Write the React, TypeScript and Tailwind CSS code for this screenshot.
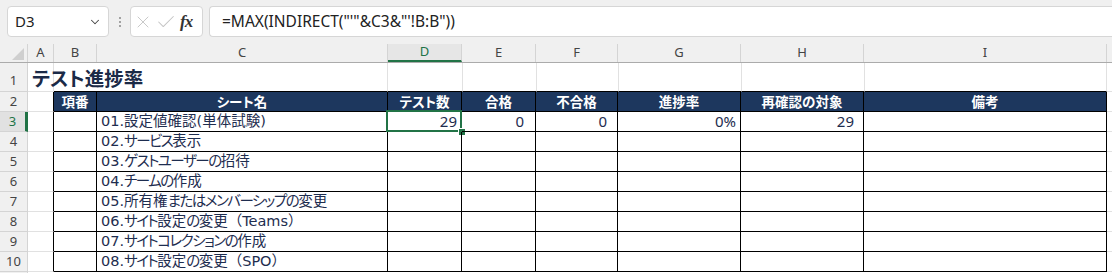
import { ChevronDown, X, Check } from "lucide-react"

const colWidths = ["w-[28px]", "w-[26px]", "w-[43px]", "w-[291px]", "w-[74px]", "w-[74px]", "w-[82px]", "w-[123px]", "w-[123px]", "w-[243px]"]
const letters = ["A", "B", "C", "D", "E", "F", "G", "H", "I"]
const headers = ["項番", "シート名", "テスト数", "合格", "不合格", "進捗率", "再確認の対象", "備考"]
const sheets = [
  "01.設定値確認(単体試験)",
  "02.サービス表示",
  "03.ゲストユーザーの招待",
  "04.チームの作成",
  "05.所有権またはメンバーシップの変更",
  "06.サイト設定の変更（Teams）",
  "07.サイトコレクションの作成",
  "08.サイト設定の変更（SPO）",
]

const cellFont = { fontFamily: '"Noto Sans CJK JP", "Noto Sans", sans-serif' }
const nameFont = { fontFamily: '"DejaVu Sans", "Noto Sans CJK JP", sans-serif' }
const uiFont = { fontFamily: '"Noto Sans", sans-serif' }

// kana in the reference font are narrower than Noto's, tighten them a bit
function SheetName({ text }: { text: string }) {
  const parts = text.split(/([\u3040-\u30ff]+|[（）])/)
  return (
    <>
      {parts.map((p, i) => {
        if (/^[\u3040-\u30ff]+$/.test(p)) return <span key={i} className="tracking-[-1.5px]">{p}</span>
        if (p === "（" || p === "）") return <span key={i} className="[font-feature-settings:normal]">{p}</span>
        return <span key={i}>{p}</span>
      })}
    </>
  )
}

function FormulaBar() {
  return (
    <div className="h-[44px] bg-[#f0f0f0] flex items-start pt-[6px]">
      <div className="ml-[7px] w-[102px] h-[31px] bg-white border border-[#d6d6d6] rounded-[4px] flex items-center justify-between pl-[7px] pr-[6px]">
        <span className="text-[15px] text-[#222]" style={uiFont}>D3</span>
        <ChevronDown size={14} strokeWidth={1.75} className="text-[#444]" />
      </div>
      <div className="w-[21px] h-[31px] flex flex-col items-center justify-center gap-[2px]">
        <span className="w-[2px] h-[2px] bg-[#888] rounded-full" />
        <span className="w-[2px] h-[2px] bg-[#888] rounded-full" />
        <span className="w-[2px] h-[2px] bg-[#888] rounded-full" />
      </div>
      <div className="w-[73px] h-[31px] bg-white border border-[#d6d6d6] rounded-[4px] flex items-center pl-[2px] gap-[2px]">
        <X size={20} strokeWidth={1.1} className="text-[#c4c4c4]" />
        <Check size={22} strokeWidth={1.1} className="text-[#c4c4c4]" />
        <span className="text-[17px] italic font-bold text-[#333] ml-[1px] tracking-[-1px]" style={{ fontFamily: '"Liberation Serif", serif' }}>fx</span>
      </div>
      <div className="ml-[6px] flex-1 h-[31px] bg-white border border-r-0 border-[#d6d6d6] rounded-l-[4px] flex items-center pl-[12px]">
        <span className="text-[15.5px] text-[#222]" style={uiFont}>=MAX(INDIRECT("'"&amp;C3&amp;"'!B:B"))</span>
      </div>
    </div>
  )
}

function ColumnHeader() {
  return (
    <div className="flex h-[19px] bg-[#f0f0f0] border-b border-[#ababab]" style={uiFont}>
      <div className={`${colWidths[0]} shrink-0 border-r border-[#d4d4d4] relative`}>
        <svg width="12" height="12" viewBox="0 0 12 12" className="absolute right-[3px] bottom-[2px]">
          <polygon points="12,0 12,12 0,12" fill="#cfcfcf" />
        </svg>
      </div>
      {letters.map((l, i) =>
        l === "D" ? (
          <div key={l} className={`${colWidths[i + 1]} shrink-0 border-r border-[#d4d4d4] bg-[#e6e6e6] text-[#217346] text-[13px] flex items-center justify-center border-b-2 border-b-[#217346]`}>
            {l}
          </div>
        ) : (
          <div key={l} className={`${colWidths[i + 1]} shrink-0 border-r border-[#d4d4d4] text-[#444] text-[13px] flex items-center justify-center`}>
            {l}
          </div>
        )
      )}
      <div className="flex-1" />
    </div>
  )
}

function RowNum({ n, tall, selected }: { n?: number; tall?: boolean; selected?: boolean }) {
  return (
    <div
      className={`${colWidths[0]} shrink-0 ${tall ? "h-[29px] items-end pb-[1px]" : "h-[20px] items-center"} flex justify-center border-r border-b text-[13px] ${
        selected ? "bg-[#e1e1e1] text-[#217346] border-r-[3px] border-r-[#217346] border-b-[#d4d4d4]" : "bg-[#f0f0f0] text-[#444] border-[#d4d4d4]"
      }`}
      style={uiFont}
    >
      {n}
    </div>
  )
}

function TitleRow() {
  return (
    <div className="flex h-[29px]">
      <RowNum n={1} tall />
      <div className="w-[26px] shrink-0 border-r border-b border-[#e1e1e1] relative">
        <span className="absolute left-[4px] bottom-[4px] whitespace-nowrap text-[19.5px] font-bold text-[#1b2a47] leading-none [font-feature-settings:'palt']" style={cellFont}>
          テスト進捗率
        </span>
      </div>
      <div className="w-[43px] shrink-0 border-b border-b-black" />
      <div className="w-[291px] shrink-0 border-b border-b-black" />
      <div className="w-[75px] -ml-px shrink-0 border-l border-l-[#e1e1e1] border-b border-b-black" />
      <div className="w-[74px] shrink-0 border-l border-l-[#e1e1e1] border-b border-b-black" />
      <div className="w-[82px] shrink-0 border-l border-l-[#e1e1e1] border-b border-b-black" />
      <div className="w-[123px] shrink-0 border-l border-l-[#e1e1e1] border-b border-b-black" />
      <div className="w-[123px] shrink-0 border-l border-l-[#e1e1e1] border-b border-b-black" />
      <div className="w-[243px] shrink-0 border-l border-l-[#e1e1e1] border-b border-b-black border-r border-r-[#e1e1e1]" />
      <div className="flex-1 border-b border-[#e1e1e1]" />
    </div>
  )
}

function HeaderRow() {
  return (
    <div className="flex h-[20px]">
      <RowNum n={2} />
      <div className="w-[26px] shrink-0 border-r border-r-black border-b border-b-[#e1e1e1]" />
      {headers.map((h, i) => (
        <div
          key={h}
          className={`${colWidths[i + 2]} shrink-0 bg-[#1d375e] border-r border-b border-black text-white font-bold text-[13.5px] flex items-center justify-center leading-none [font-feature-settings:'palt']`}
          style={cellFont}
        >
          {h}
        </div>
      ))}
      <div className="flex-1 border-b border-[#e1e1e1]" />
    </div>
  )
}

function DataRow({ n, name, values }: { n: number; name: string; values?: string[] }) {
  const pads = ["pr-[4px]", "pr-[11px]", "pr-[10px]", "pr-[4px]", "pr-[9px]", "pr-[4px]"]
  return (
    <div className="flex h-[20px]">
      <RowNum n={n} selected={n === 3} />
      <div className="w-[26px] shrink-0 border-r border-r-black border-b border-b-[#e1e1e1]" />
      <div className="w-[43px] shrink-0 border-r border-b border-black" />
      <div
        className="w-[291px] shrink-0 border-r border-b border-black flex items-center pl-[4px] text-[14.5px] text-[#1e2d4f] whitespace-nowrap leading-none [font-feature-settings:'palt']"
        style={nameFont}
      >
        <SheetName text={name} />
      </div>
      {[4, 5, 6, 7, 8, 9].map((c, i) => (
        <div
          key={c}
          className={`${colWidths[c]} shrink-0 border-r border-b border-black flex items-center justify-end ${pads[i]} text-[15px] text-[#1e2d4f] relative`}
          style={uiFont}
        >
          {values ? values[i] : ""}
          {values && c === 4 && (
            <>
              <div className="absolute left-[-2px] top-[-2px] right-[-1px] bottom-[-1px] border-2 border-[#217346]" />
              <div className="absolute right-[-4px] bottom-[-4px] w-[6px] h-[6px] bg-[#217346] outline outline-1 outline-white" />
            </>
          )}
        </div>
      ))}
      <div className="flex-1 border-b border-[#e1e1e1]" />
    </div>
  )
}

export default function App() {
  return (
    <div className="w-[1112px] h-[273px] overflow-hidden bg-white">
      <FormulaBar />
      <ColumnHeader />
      <TitleRow />
      <HeaderRow />
      {sheets.map((s, i) => (
        <DataRow key={s} n={i + 3} name={s} values={i === 0 ? ["29", "0", "0", "0%", "29", ""] : undefined} />
      ))}
      <div className="flex h-[20px]">
        <RowNum />
      </div>
    </div>
  )
}
